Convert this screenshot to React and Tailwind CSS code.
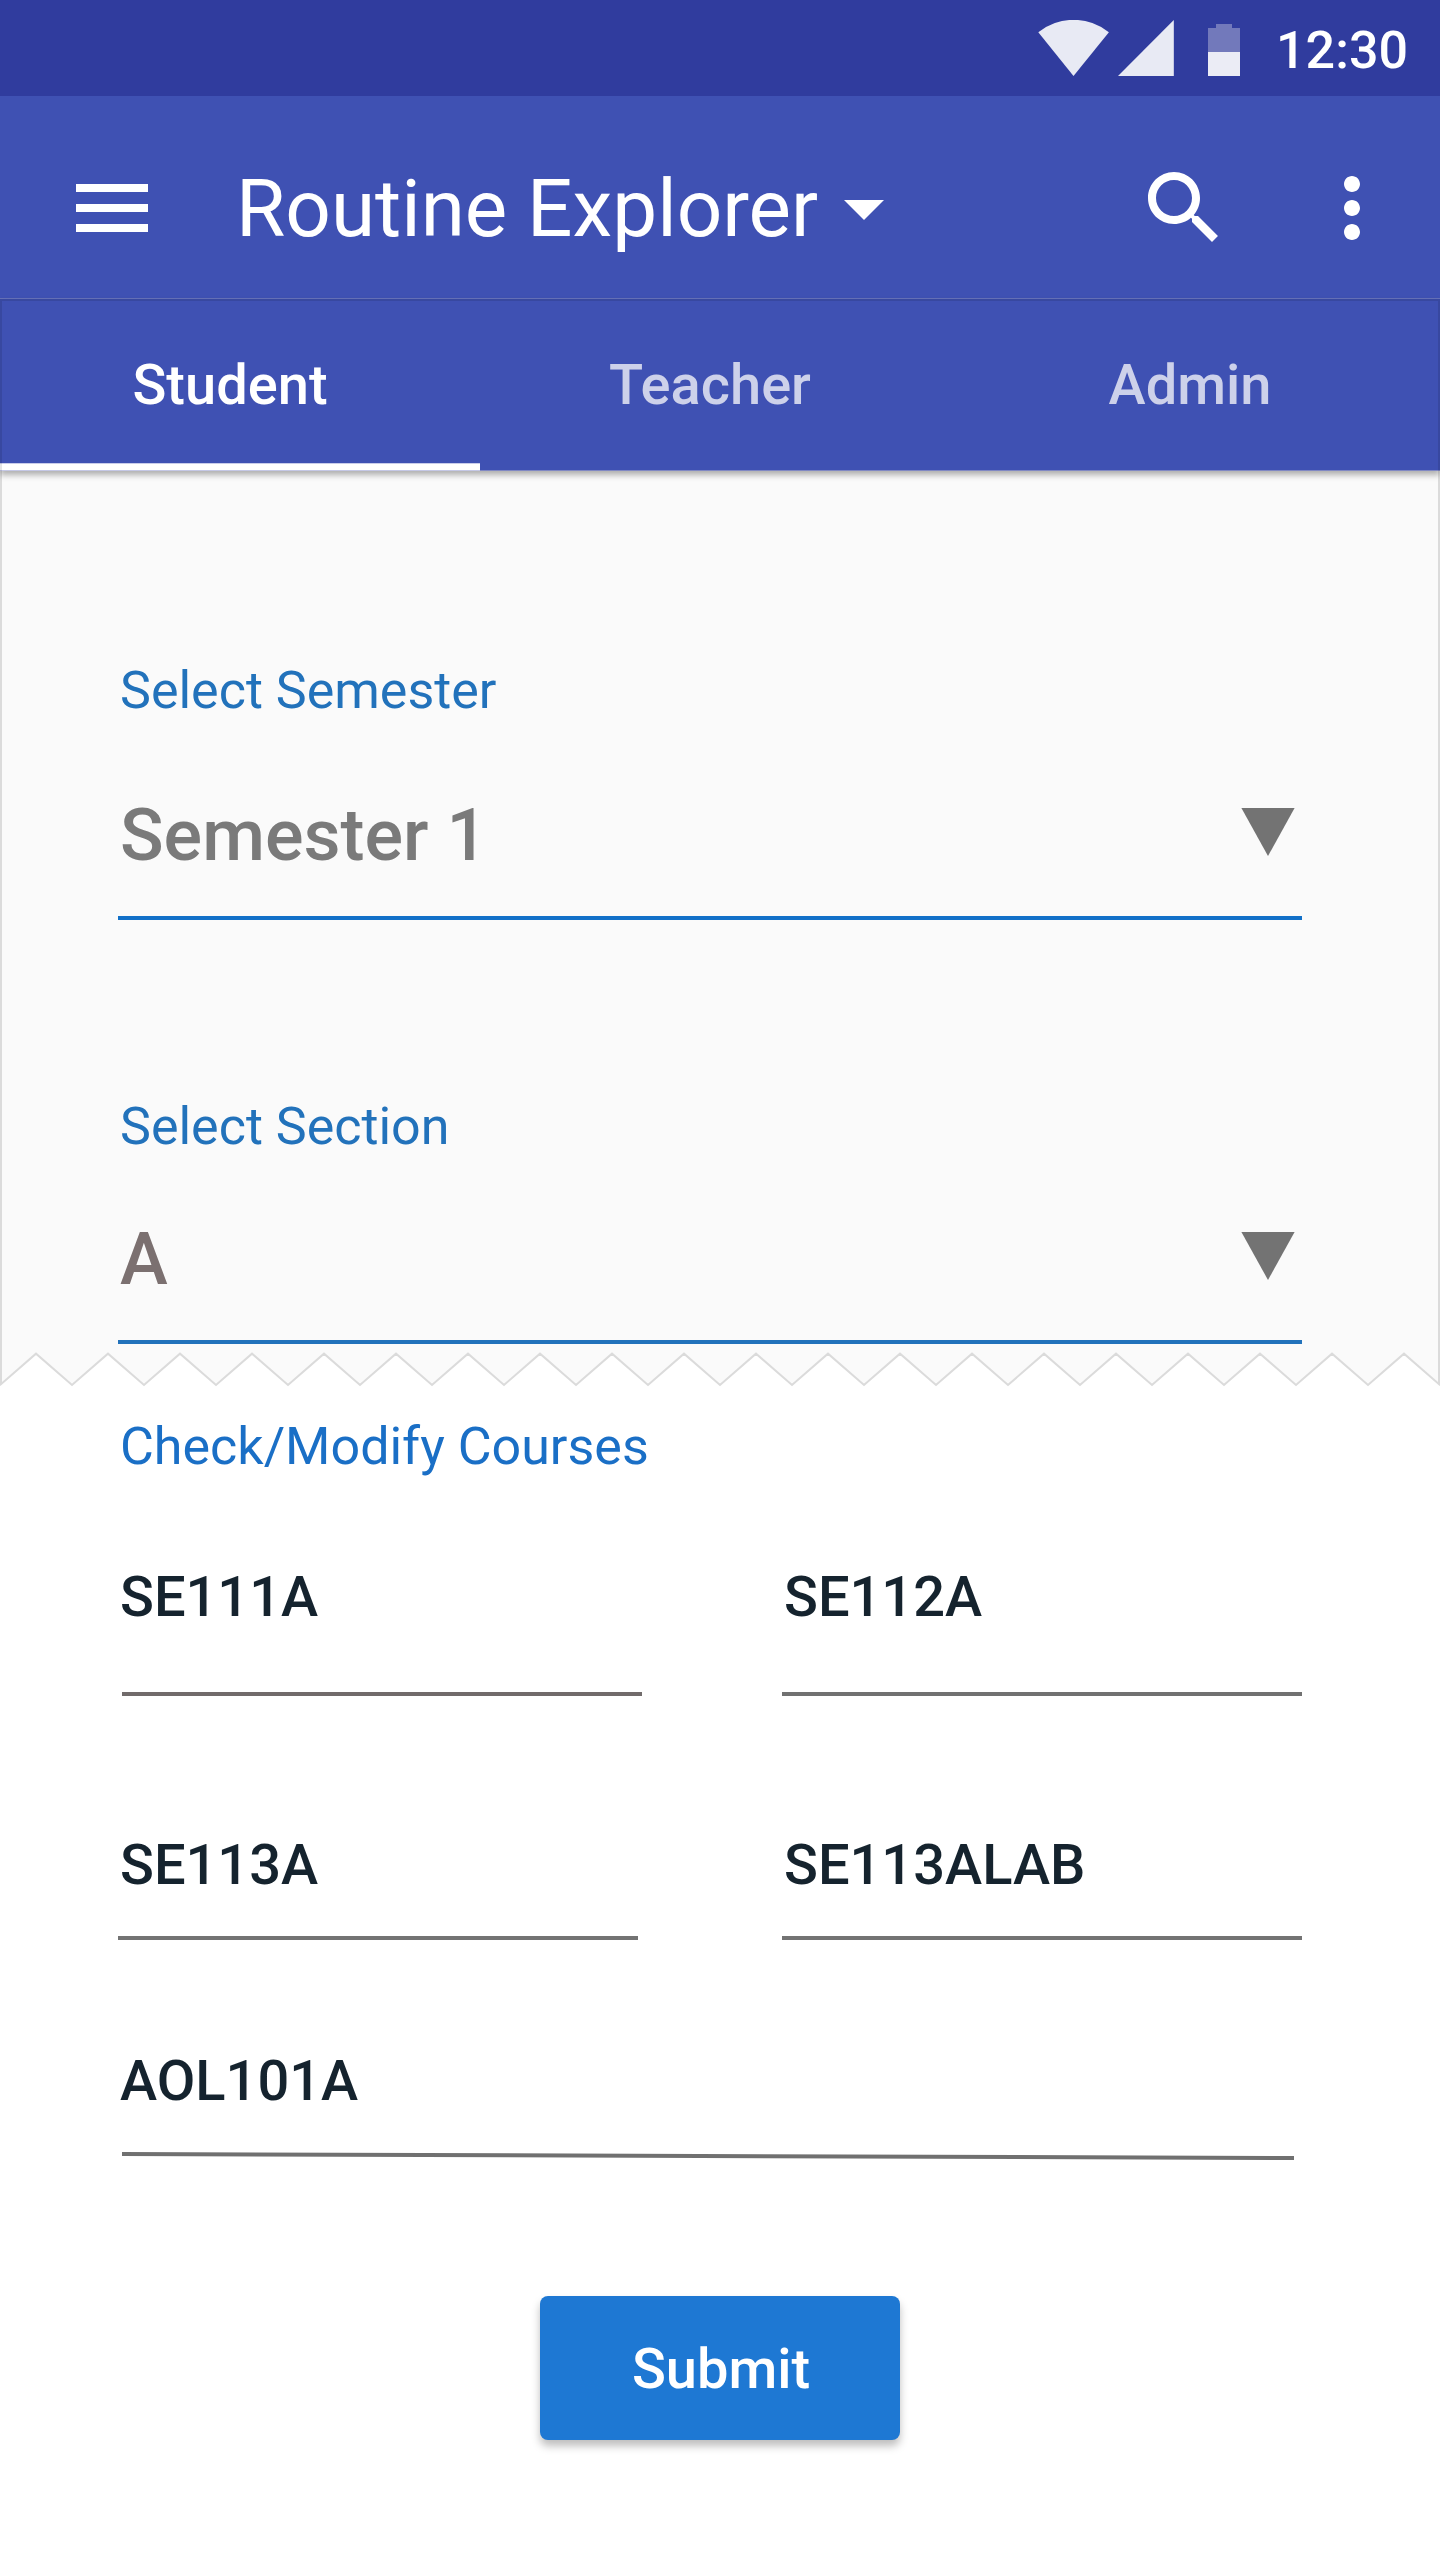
const tabs = [
  { label: "Student", active: true },
  { label: "Teacher", active: false },
  { label: "Admin", active: false },
];

function StatusBar() {
  return (
    <div className="flex h-24 items-start justify-end bg-[#303c9e] pr-8 pt-5">
      <svg className="h-14 w-[72px]" viewBox="0 0 72 56" fill="#e8eaf4">
        <path d="M35.5 56 L.3 12.3 A56.2 56.2 0 0 1 70.9 12.3 Z" />
      </svg>
      <svg className="ml-2 h-14 w-14" viewBox="0 0 56 56" fill="#e8eaf4">
        <path d="M0 56H55.8V0Z" />
      </svg>
      <svg className="ml-[34px] h-14 w-8" viewBox="0 0 32 56">
        <path fill="#7279bb" d="M8 4H24V8H32V32H0V8H8Z" />
        <path fill="#ebecf5" d="M0 32H32V56H0Z" />
      </svg>
      <div className="ml-9 w-[132px] whitespace-nowrap text-right text-[52px] font-medium leading-[61px] text-white">
        12:30
      </div>
    </div>
  );
}

function AppBar() {
  return (
    <header className="flex h-[203px] items-start border-b border-[#6772b9] bg-[#3f51b3] pl-16 pr-10 pt-16 text-white">
      <svg className="size-24" viewBox="0 0 24 24" fill="currentColor">
        <path d="M3 18h18v-2H3v2zm0-5h18v-2H3v2zm0-7v2h18V6H3z" />
      </svg>
      <h1 className="ml-[76px] mt-0.5 whitespace-nowrap text-[80px] font-normal leading-[94px]">
        Routine Explorer
      </h1>
      <svg className="ml-[26px] mt-10 h-5 w-10" viewBox="0 0 40 20" fill="currentColor">
        <path d="M0 0H40L20 20Z" />
      </svg>
      <div className="ml-auto flex gap-[72px]">
        <svg className="size-24" viewBox="0 0 24 24" fill="currentColor">
          <path d="M15.5 14h-.79l-.28-.27C15.41 12.59 16 11.11 16 9.5 16 5.91 13.09 3 9.5 3S3 5.91 3 9.5 5.91 16 9.5 16c1.61 0 3.09-.59 4.23-1.57l.27.28v.79l5 4.99L20.49 19l-4.99-5zm-6 0C7.01 14 5 11.99 5 9.5S7.01 5 9.5 5 14 7.01 14 9.5 11.99 14 9.5 14z" />
        </svg>
        <svg className="size-24" viewBox="0 0 24 24" fill="currentColor">
          <path d="M12 8c1.1 0 2-.9 2-2s-.9-2-2-2-2 .9-2 2 .9 2 2 2zm0 2c-1.1 0-2 .9-2 2s.9 2 2 2 2-.9 2-2-.9-2-2-2zm0 6c-1.1 0-2 .9-2 2s.9 2 2 2 2-.9 2-2-.9-2-2-2z" />
        </svg>
      </div>
    </header>
  );
}

function Tabs() {
  return (
    <nav className="relative grid h-[172px] grid-cols-3 bg-[#3f51b3] shadow-[0_4px_6px_rgba(0,0,0,0.3)]">
      {tabs.map((tab) => (
        <div
          key={tab.label}
          className={
            tab.active
              ? "border-b border-[#c5c8e6] pr-5 pt-[53px] text-center text-[56px] font-medium leading-[66px] text-white shadow-[inset_0_-6px_0_#ffffff,inset_0_-7px_0_#c9cdea]"
              : "border-b border-[#8088c3] pr-5 pt-[53px] text-center text-[56px] font-medium leading-[66px] text-[#cdd1ea]"
          }
        >
          {tab.label}
        </div>
      ))}
      <div className="pointer-events-none absolute inset-0 border-x-2 border-t-2 border-black/10" />
    </nav>
  );
}

function Arrow() {
  return (
    <svg className="mr-[7px] mt-[15px] h-12 w-[54px]" viewBox="0 0 54 48" fill="#737373">
      <path d="M.4 0H53.6L27 48Z" />
    </svg>
  );
}

function TornEdge() {
  const points = Array.from({ length: 41 }, (_, i) => `${i * 36},${i % 2 ? 1.7 : 33}`).join(" ");
  return (
    <svg className="block h-9 w-full" viewBox="0 0 1440 36">
      <polygon fill="#fafafa" points={`0,0 ${points} 1440,0`} />
      <path fill="#dbdbdb" d="M0 0H2V32L0 34ZM1438 0H1440V34L1438 32Z" />
      <polyline fill="none" stroke="#dbdbdb" strokeWidth="2" points={points} />
    </svg>
  );
}

export default function App() {
  return (
    <div className="flex h-[2560px] w-[1440px] flex-col overflow-hidden bg-white font-[Roboto,sans-serif]">
      <StatusBar />
      <AppBar />
      <Tabs />

      <section className="h-[881px] border-x-2 border-[#dbdbdb] bg-[#fafafa] pl-[116px] pr-[136px] pt-[189px]">
        <div className="pl-0.5 text-[52px] leading-[61px] text-[#2272bb]">Select Semester</div>
        <div className="mt-[72px] flex h-[127px] justify-between border-b-4 border-[#1170c8] pl-0.5">
          <span className="text-[72px] font-medium leading-[85px] text-[#7a7a7a]">Semester 1</span>
          <Arrow />
        </div>

        <div className="mt-[176px] pl-0.5 text-[52px] leading-[61px] text-[#2272bb]">Select Section</div>
        <div className="mt-[60px] flex h-[127px] justify-between border-b-4 border-[#2272bb] pl-0.5">
          <span className="text-[72px] font-medium leading-[85px] text-[#7b7070]">A</span>
          <Arrow />
        </div>
      </section>
      <TornEdge />

      <section className="flex flex-col pl-[118px] pr-[138px] pt-7 font-medium text-[#15232e]">
        <div className="pl-0.5 text-[52px] font-normal leading-[61px] text-[#1a6fc6]">Check/Modify Courses</div>

        <div className="mt-[87px] grid grid-cols-2 gap-x-36 text-[56px] leading-[66px]">
          <div>
            <div className="pl-0.5">SE111A</div>
            <div className="ml-1 mt-[62px] h-1 w-[520px] bg-[#716b6b]" />
          </div>
          <div>
            <div className="pl-0.5">SE112A</div>
            <div className="mt-[62px] h-1 bg-[#717171]" />
          </div>
        </div>

        <div className="mt-[136px] grid grid-cols-2 gap-x-36 text-[56px] leading-[66px]">
          <div>
            <div className="pl-0.5">SE113A</div>
            <div className="mt-[38px] h-1 bg-[#737373]" />
          </div>
          <div>
            <div className="pl-0.5">SE113ALAB</div>
            <div className="mt-[38px] h-1 bg-[#737373]" />
          </div>
        </div>

        <div className="mt-[108px] pl-0.5 text-[56px] leading-[66px]">AOL101A</div>
        <svg className="ml-1 mt-9 h-3 w-[1172px]" viewBox="0 0 1172 12">
          <line x1="0" y1="4" x2="1172" y2="8" stroke="#707070" strokeWidth="4" />
        </svg>

        <button className="ml-[422px] mt-[134px] flex h-36 w-[360px] justify-center rounded-lg bg-[#1e78d3] pl-0.5 pt-10 text-[56px] font-medium leading-[66px] text-white shadow-[0_6px_8px_rgba(0,0,0,0.26)]">
          Submit
        </button>
      </section>
    </div>
  );
}
